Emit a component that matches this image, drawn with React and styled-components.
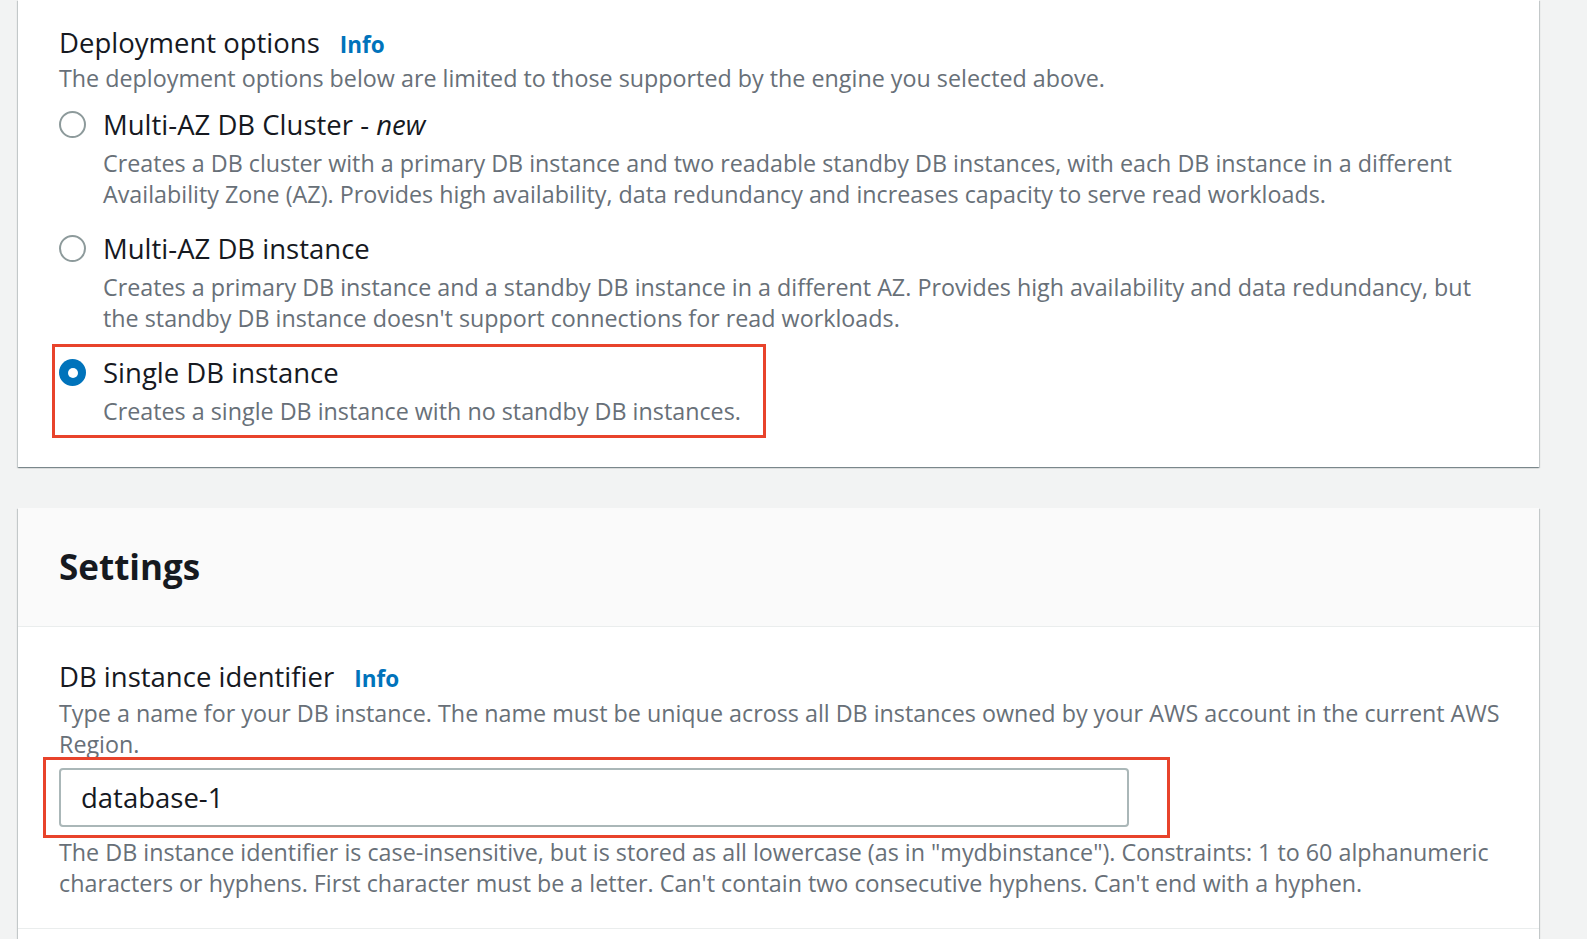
import styled, { createGlobalStyle } from "styled-components";

const GlobalStyle = createGlobalStyle`
  html, body {
    margin: 0;
    padding: 0;
    background-color: #f2f3f3;
    font-family: "Open Sans", "Noto Sans", sans-serif;
    color: #16191f;
  }
`;

const Page = styled.div`
  display: flex;
  flex-direction: column;
  gap: 41px;
  padding: 0 48px 0 18px;
  height: 939px;
  overflow: hidden;
`;

const Card = styled.section`
  background-color: #ffffff;
  box-shadow: 0 1px 1px 0 rgba(0, 28, 36, 0.3), 1px 1px 1px 0 rgba(0, 28, 36, 0.15),
    -1px 1px 1px 0 rgba(0, 28, 36, 0.15);
  display: flex;
  flex-direction: column;
  flex-shrink: 0;
  ${(p) => p.$grow && "flex: 1;"}
`;

const CardBody = styled.div`
  padding: ${(p) => p.$pad || "26px 41px 40px"};
  display: flex;
  flex-direction: column;
`;

const Header = styled.div`
  background-color: #fafafa;
  border-bottom: 1px solid #eaeded;
  height: 118px;
  padding: 0 41px;
  display: flex;
  align-items: center;
`;

const HeaderTitle = styled.h2`
  margin: 0;
  font-size: 35px;
  font-weight: 700;
  line-height: 40px;
`;

const LabelRow = styled.div`
  display: flex;
  align-items: baseline;
  gap: 20px;
`;

const Label = styled.span`
  font-size: 27.5px;
  line-height: 34px;
`;

const InfoLink = styled.a`
  font-size: 22.5px;
  font-weight: 700;
  color: #0073bb;
  text-decoration: none;
`;

const Desc = styled.div`
  font-size: 23.3px;
  line-height: ${(p) => p.$lh || "31.5px"};
  color: #687078;
  white-space: nowrap;
  margin-top: ${(p) => p.$mt || "0"};
`;

const Options = styled.div`
  display: flex;
  flex-direction: column;
  gap: 21px;
  margin-top: 13px;
`;

const Option = styled.div`
  display: flex;
  flex-direction: column;
  gap: 6px;
`;

const Highlight = styled.div`
  align-self: flex-start;
  border: 3px solid #e8432b;
  margin: ${(p) => p.$margin};
  padding: ${(p) => p.$padding};
`;

const OptionHead = styled.label`
  display: flex;
  align-items: center;
  gap: 17px;
  font-size: 27.5px;
  line-height: 34px;
`;

const Radio = styled.span`
  width: 27px;
  height: 27px;
  border-radius: 50%;
  box-sizing: border-box;
  flex-shrink: 0;
  display: flex;
  align-items: center;
  justify-content: center;
  border: ${(p) => (p.$checked ? "none" : "2px solid #8d9a9b")};
  background-color: ${(p) => (p.$checked ? "#0073bb" : "#ffffff")};

  &::after {
    content: "";
    display: ${(p) => (p.$checked ? "block" : "none")};
    width: 10px;
    height: 10px;
    border-radius: 50%;
    background-color: #ffffff;
  }
`;

const OptionDesc = styled(Desc)`
  padding-left: 44px;
`;

const Input = styled.input`
  width: 1070px;
  height: 59px;
  box-sizing: border-box;
  border: 2px solid #aab7b8;
  border-radius: 4px;
  padding: 0 20px;
  font-family: inherit;
  font-size: 27.5px;
  color: #16191f;
  background: #ffffff;
  display: block;

  &:focus {
    outline: none;
  }
`;

const Divider = styled.div`
  border-top: 1px solid #eaeded;
`;

const options = [
  {
    title: (
      <span>
        Multi-AZ DB Cluster - <em>new</em>
      </span>
    ),
    lines: [
      "Creates a DB cluster with a primary DB instance and two readable standby DB instances, with each DB instance in a different",
      "Availability Zone (AZ). Provides high availability, data redundancy and increases capacity to serve read workloads.",
    ],
  },
  {
    title: <span>Multi-AZ DB instance</span>,
    lines: [
      "Creates a primary DB instance and a standby DB instance in a different AZ. Provides high availability and data redundancy, but",
      "the standby DB instance doesn't support connections for read workloads.",
    ],
  },
  {
    title: <span>Single DB instance</span>,
    lines: ["Creates a single DB instance with no standby DB instances."],
    checked: true,
  },
];

const renderLines = (lines) =>
  lines.map((l, i) => (
    <span key={i}>
      {l}
      {i < lines.length - 1 && <br />}
    </span>
  ));

const OptionItem = ({ title, lines, checked }) => (
  <Option>
    <OptionHead>
      <Radio $checked={checked} />
      {title}
    </OptionHead>
    <OptionDesc>{renderLines(lines)}</OptionDesc>
  </Option>
);

const App = () => {
  return (
    <>
      <GlobalStyle />
      <Page>
        <Card>
          <CardBody>
            <LabelRow>
              <Label>Deployment options</Label>
              <InfoLink href="#">Info</InfoLink>
            </LabelRow>
            <Desc $mt="3px">
              The deployment options below are limited to those supported by the engine you
              selected above.
            </Desc>
            <Options>
              {options.map((o, i) =>
                o.checked ? (
                  <Highlight key={i} $margin="-12px 0 -11px -7px" $padding="9px 22px 8px 4px">
                    <OptionItem {...o} />
                  </Highlight>
                ) : (
                  <OptionItem key={i} {...o} />
                )
              )}
            </Options>
          </CardBody>
        </Card>

        <Card $grow>
          <Header>
            <HeaderTitle>Settings</HeaderTitle>
          </Header>
          <CardBody $pad="33px 41px 30px">
            <LabelRow>
              <Label>DB instance identifier</Label>
              <InfoLink href="#">Info</InfoLink>
            </LabelRow>
            <Desc $lh="30.5px" $mt="4px">
              {renderLines([
                "Type a name for your DB instance. The name must be unique across all DB instances owned by your AWS account in the current AWS",
                "Region.",
              ])}
            </Desc>
            <Highlight $margin="-2px 0 0 -16px" $padding="8px 38px 8px 13px">
              <Input defaultValue="database-1" />
            </Highlight>
            <Desc $lh="30.5px" $mt="-1px">
              {renderLines([
                'The DB instance identifier is case-insensitive, but is stored as all lowercase (as in "mydbinstance"). Constraints: 1 to 60 alphanumeric',
                "characters or hyphens. First character must be a letter. Can't contain two consecutive hyphens. Can't end with a hyphen.",
              ])}
            </Desc>
          </CardBody>
          <Divider />
        </Card>
      </Page>
    </>
  );
};

export default App;
